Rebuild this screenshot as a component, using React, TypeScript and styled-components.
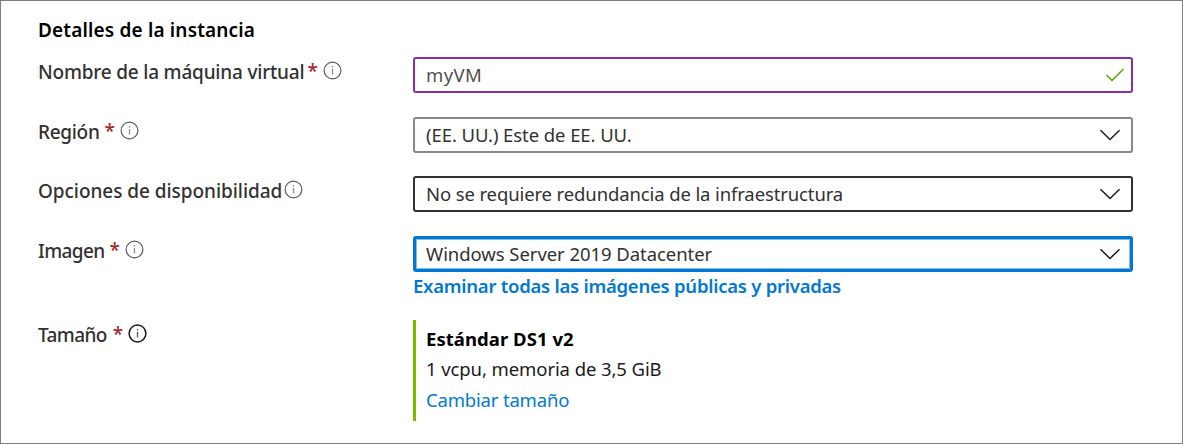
import React from 'react';
import styled, { createGlobalStyle } from 'styled-components';

const GlobalStyle = createGlobalStyle`
  *, *::before, *::after { box-sizing: border-box; }
  body { margin: 0; background: #fff; }
`;

const Panel = styled.main`
  width: 1183px;
  height: 444px;
  padding: 15px 0 0 37px;
  border: 1px solid #7f7f7f;
  background: #fff;
  color: #323130;
  font-family: "Noto Sans", "Open Sans", sans-serif;
  font-size: 19px;
  line-height: 28px;
  white-space: nowrap;
`;

const Heading = styled.h2`
  margin: 0 0 13px;
  color: #000;
  font-size: 19px;
  font-weight: 600;
  line-height: 28px;
  letter-spacing: 0.16px;
`;

const Row = styled.div<{ $height: number }>`
  display: grid;
  grid-template-columns: 375px 720px;
  align-items: start;
  height: ${p => p.$height}px;
`;

const LabelCell = styled.div`
  display: flex;
  align-items: center;
  height: 28px;
`;

const LabelText = styled.label<{ $spacing: number }>`
  padding-top: 1px;
  font-weight: 500;
  letter-spacing: ${p => p.$spacing}px;
`;

const Required = styled.span<{ $gap: number }>`
  margin-left: ${p => p.$gap}px;
  color: #a4262c;
  font-weight: 500;
`;

const InfoSvg = styled.svg<{ $gap: number }>`
  flex: none;
  width: 19px;
  height: 19px;
  margin: -2px 0 0 ${p => p.$gap}px;
`;

const Field = styled.div<{ $color: string; $thick?: boolean; $end?: number }>`
  display: flex;
  align-items: center;
  justify-content: space-between;
  height: 36px;
  padding: 0 ${p => (p.$end ?? 9) - (p.$thick ? 1 : 0)}px 0 ${p => (p.$thick ? 10 : 11)}px;
  border: ${p => (p.$thick ? 3 : 2)}px solid ${p => p.$color};
  border-radius: 3px;
  box-shadow: ${p => (p.$thick ? 'inset 0 0 0 1px #7fbcec' : 'none')};
`;

const Value = styled.span<{ $spacing: number; $muted?: boolean }>`
  font-size: 18.5px;
  letter-spacing: ${p => p.$spacing}px;
  color: ${p => (p.$muted ? '#505050' : '#323130')};
`;

const BrowseLink = styled.a`
  display: block;
  color: #0078d4;
  font-size: 18.5px;
  font-weight: 600;
  letter-spacing: -0.25px;
`;

const SizeCard = styled.div`
  height: 101px;
  padding: 4px 0 0 10px;
  border-left: 3px solid #7fba00;
  color: #1b1a19;
  font-size: 18.5px;
  line-height: 30px;
`;

const SizeName = styled.div`
  color: #000;
  font-weight: 700;
  letter-spacing: 0.05px;
`;

const SizeSpec = styled.div`
  letter-spacing: -0.09px;
`;

const SizeLink = styled.a`
  display: block;
  padding-top: 1px;
  color: #0078d4;
  letter-spacing: -0.18px;
`;

const InfoIcon = ({ gap, dark }: { gap: number; dark?: boolean }) => (
  <InfoSvg $gap={gap} viewBox="0 0 19 19" fill="none">
    <circle cx="9.5" cy="9.5" r="8.4" stroke={dark ? '#1b1a19' : '#5c5c5c'} strokeWidth={dark ? 1.5 : 1.2} />
    <path d="M9.5 8v5.5M9.5 5v1.4" stroke={dark ? '#555' : '#8a8a8a'} strokeWidth="1.3" />
  </InfoSvg>
);

const Chevron = () => (
  <svg width="24" height="14" viewBox="0 0 24 14" fill="none">
    <path d="M2.5 2.3 12 11.5 21.5 2.3" stroke="#1b1a19" strokeWidth="1.5" />
  </svg>
);

const Check = () => (
  <svg width="20" height="16" viewBox="0 0 20 16" fill="none">
    <path d="M1.5 8 7 13.5 18.5 2" stroke="#57a300" strokeWidth="1.5" />
  </svg>
);

type LabelProps = { text: string; spacing: number; starGap?: number; iconGap: number; dark?: boolean };

const Label = ({ text, spacing, starGap, iconGap, dark }: LabelProps) => (
  <LabelCell>
    <LabelText $spacing={spacing}>{text}</LabelText>
    {starGap !== undefined && <Required $gap={starGap}>*</Required>}
    <InfoIcon gap={iconGap} dark={dark} />
  </LabelCell>
);

export default function App() {
  return (
    <>
      <GlobalStyle />
      <Panel>
        <Heading>Detalles de la instancia</Heading>
        <Row $height={60}>
          <Label text="Nombre de la máquina virtual" spacing={-0.2} starGap={3} iconGap={5} />
          <Field $color="#8a2da5" $end={6}>
            <Value $spacing={0.4} $muted>myVM</Value>
            <Check />
          </Field>
        </Row>
        <Row $height={59}>
          <Label text="Región" spacing={-0.3} starGap={5} iconGap={5} />
          <Field $color="#8a8886">
            <Value $spacing={-0.08}>(EE. UU.) Este de EE. UU.</Value>
            <Chevron />
          </Field>
        </Row>
        <Row $height={60}>
          <Label text="Opciones de disponibilidad" spacing={-0.05} iconGap={2} />
          <Field $color="#323130">
            <Value $spacing={-0.12}>No se requiere redundancia de la infraestructura</Value>
            <Chevron />
          </Field>
        </Row>
        <Row $height={84}>
          <Label text="Imagen" spacing={-0.6} starGap={5} iconGap={5} />
          <div>
            <Field $color="#0078d4" $thick>
              <Value $spacing={-0.06}>Windows Server 2019 Datacenter</Value>
              <Chevron />
            </Field>
            <BrowseLink>Examinar todas las imágenes públicas y privadas</BrowseLink>
          </div>
        </Row>
        <Row $height={101}>
          <Label text="Tamaño" spacing={-0.6} starGap={6} iconGap={5} dark />
          <SizeCard>
            <SizeName>Estándar DS1 v2</SizeName>
            <SizeSpec>1 vcpu, memoria de 3,5 GiB</SizeSpec>
            <SizeLink>Cambiar tamaño</SizeLink>
          </SizeCard>
        </Row>
      </Panel>
    </>
  );
}
